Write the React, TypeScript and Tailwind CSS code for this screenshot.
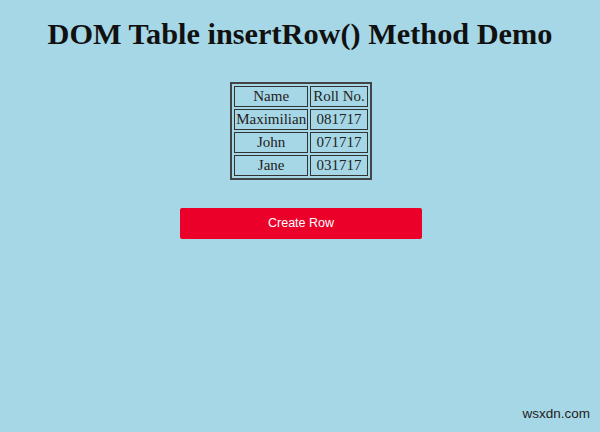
const rows = [
  ["Maximilian", "081717"],
  ["John", "071717"],
  ["Jane", "031717"],
];

export default function App() {
  return (
    <div className="relative w-[600px] h-[432px] bg-[#a6d7e6] overflow-hidden font-['Liberation_Serif',serif] text-black">
      <h1 className="pt-[16px] text-center text-[30.3px] leading-[36px] font-bold text-[#111]">
        DOM Table insertRow() Method Demo
      </h1>
      <div className="flex justify-center mt-[30px] pl-[2px]">
        <table className="border-2 border-[#444] border-separate border-spacing-[2px] text-[15px] leading-[17px] text-[#222]">
          <tbody>
            <tr>
              <td className="border border-[#333] px-px py-[1px] text-center">Name</td>
              <td className="border border-[#333] px-[2px] py-[1px] text-center">Roll No.</td>
            </tr>
            {rows.map(([name, roll]) => (
              <tr key={name}>
                <td className="border border-[#333] px-px py-[1px] text-center">{name}</td>
                <td className="border border-[#333] px-[2px] py-[1px] text-center">{roll}</td>
              </tr>
            ))}
          </tbody>
        </table>
      </div>
      <div className="flex justify-center mt-[28px] pl-[2px]">
        <button className="w-[242px] h-[31px] rounded-[2px] bg-[#ea0029] text-white text-[12.5px] font-['Liberation_Sans',sans-serif]">
          Create Row
        </button>
      </div>
      <div className="absolute right-[10px] bottom-[8px] text-[13.5px] text-[#222] font-['Liberation_Sans',sans-serif]">
        wsxdn.com
      </div>
    </div>
  );
}
